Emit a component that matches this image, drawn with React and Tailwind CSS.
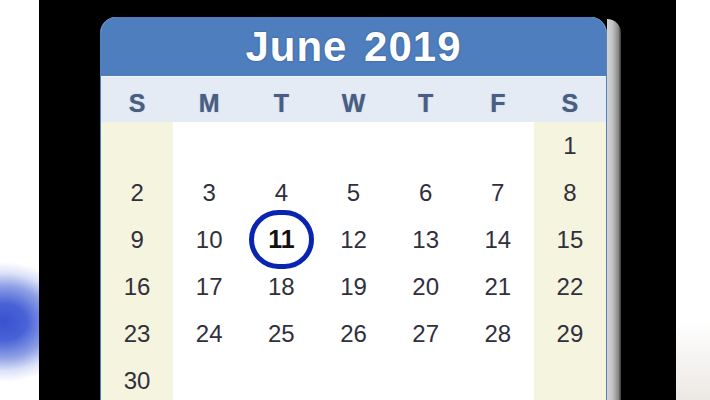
import React from "react";

const weeks = [
  ["", "", "", "", "", "", "1"],
  ["2", "3", "4", "5", "6", "7", "8"],
  ["9", "10", "11", "12", "13", "14", "15"],
  ["16", "17", "18", "19", "20", "21", "22"],
  ["23", "24", "25", "26", "27", "28", "29"],
  ["30", "", "", "", "", "", ""],
];

const days = ["S", "M", "T", "W", "T", "F", "S"];

export default function App() {
  return (
    <div className="flex w-[710px] h-[400px] overflow-hidden font-['Liberation_Sans',Arial,sans-serif]">
      <div className="w-[39px] h-full bg-white bg-[radial-gradient(ellipse_75px_60px_at_4px_322px,#3a52cf_0%,#4862d6_30%,#8fa0e6_60%,#dde3f8_82%,rgba(255,255,255,0)_100%)]" />
      <div className="w-[637px] h-full bg-black pt-[17px] pl-[61px]">
        <div className="flex">
          <div className="w-[507px] rounded-t-[16px] overflow-hidden border-x border-[#4f7fbd] bg-white">
            <div className="h-[59px] bg-[#4e7ebd] flex items-center justify-center text-white font-bold text-[42px] tracking-[1px] [word-spacing:4px] [text-shadow:0_0_2px_rgba(30,50,90,0.6)]">
              June 2019
            </div>
            <div className="h-[46px] grid grid-cols-7 bg-[#e5ebf5] border-t border-[#f4f7fb] text-[25px] font-bold text-[#485e82] [text-shadow:0_0_1px_rgba(40,60,100,0.5)]">
              {days.map((d, i) => (
                <div key={i} className="flex items-center justify-center pt-[8px]">
                  {d}
                </div>
              ))}
            </div>
            <div className="grid grid-cols-7">
              {weeks.map((w, wi) =>
                w.map((n, i) => (
                  <div
                    key={wi + "-" + i}
                    className={
                      "h-[47px] flex items-center justify-center text-[24px] text-[#30303c] " +
                      (i === 0 || i === 6 ? "bg-[#f5f4de]" : "bg-white")
                    }
                  >
                    {n === "11" ? (
                      <span className="relative z-10 shrink-0 w-[65px] h-[59px] rounded-full border-[5px] border-[#0a24b2] flex items-center justify-center font-bold text-[#111] text-[25px]">
                        11
                      </span>
                    ) : (
                      n
                    )}
                  </div>
                ))
              )}
            </div>
          </div>
          <div className="w-[14px] mt-[2px] rounded-tr-[18px] bg-[linear-gradient(90deg,#d4d4d4_0%,#c2c2c2_40%,#8a8a8a_80%,#3a3a3a_100%)]" />
        </div>
      </div>
      <div className="flex-1 h-full bg-white bg-[linear-gradient(180deg,#ffffff_80%,#ece8e4_100%)]" />
    </div>
  );
}
